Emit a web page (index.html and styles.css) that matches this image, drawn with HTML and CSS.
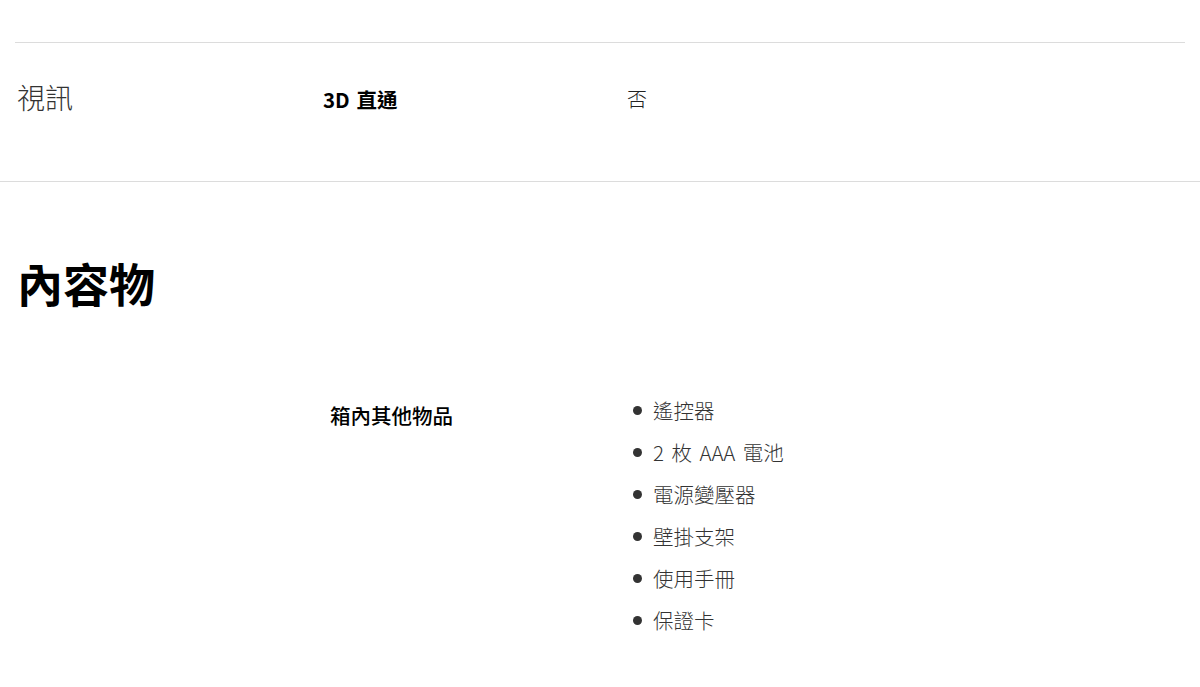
FILE: index.html
```html
<!DOCTYPE html>
<html lang="zh-Hant">
<head>
  <meta charset="UTF-8">
  <title>規格</title>
  <link rel="stylesheet" href="styles.css">
</head>
<body>
  <div class="spec-top">
    <div class="spec-row">
      <div class="spec-group">視訊</div>
      <div class="spec-name">3D 直通</div>
      <div class="spec-value">否</div>
    </div>
  </div>

  <div class="box-section">
    <h2>內容物</h2>
    <div class="box-row">
      <div></div>
      <div class="box-name">箱內其他物品</div>
      <ul class="box-list">
        <li>遙控器</li>
        <li>2 枚 AAA 電池</li>
        <li>電源變壓器</li>
        <li>壁掛支架</li>
        <li>使用手冊</li>
        <li>保證卡</li>
      </ul>
    </div>
  </div>
</body>
</html>
```

FILE: styles.css
```css
body {
  margin: 0;
  font-family: "Noto Sans CJK TC", "Noto Sans", sans-serif;
  color: #000;
  background: #fff;
}

.spec-top {
  padding-top: 42px;
  border-bottom: 1px solid #dcdcdc;
}

.spec-row {
  margin: 0 15px;
  border-top: 1px solid #dcdcdc;
  height: 139px;
  box-sizing: border-box;
  display: grid;
  grid-template-columns: 306px 304px 1fr;
  align-items: start;
  padding: 36px 0 0 2px;
  line-height: 40px;
}

.spec-group {
  font-size: 28px;
  font-weight: 300;
  color: #333;
  margin-top: -2px;
}

.spec-name {
  font-size: 20.5px;
  font-weight: 700;
  word-spacing: 2px;
}

.spec-value {
  font-size: 20px;
  font-weight: 300;
  color: #222;
}

.box-section {
  padding: 0 17px;
}

.box-section h2 {
  font-size: 46px;
  font-weight: 700;
  margin: 0;
  padding-top: 72px;
  line-height: 56px;
}

.box-row {
  display: grid;
  grid-template-columns: 313px 303px 1fr;
  margin-top: 79px;
}

.box-name {
  font-size: 20.5px;
  font-weight: 500;
  margin-top: 11px;
}

.box-list {
  margin: 0;
  padding-left: 20px;
  list-style: none;
}

.box-list li {
  position: relative;
  font-size: 20.5px;
  font-weight: 300;
  color: #333;
  line-height: 42px;
  word-spacing: 3px;
}

.box-list li::before {
  content: "";
  position: absolute;
  left: -20px;
  top: 17px;
  width: 9px;
  height: 9px;
  border-radius: 50%;
  background: #333;
}
```
